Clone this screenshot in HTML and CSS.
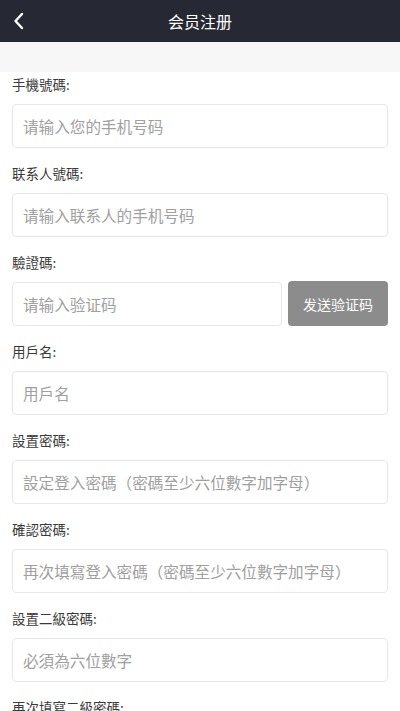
FILE: index.html
```html
<!DOCTYPE html>
<html lang="zh">
<head>
<meta charset="utf-8">
<meta name="viewport" content="width=device-width, initial-scale=1">
<title>会员注册</title>
<link rel="stylesheet" href="styles.css">
</head>
<body>
<header class="topbar">
  <a class="back" href="#" aria-label="返回">
    <svg width="14" height="18" viewBox="0 0 14 18"><path d="M10 2 L3.5 9 L10 16" fill="none" stroke="#fff" stroke-width="2.4" stroke-linecap="round" stroke-linejoin="round"/></svg>
  </a>
  <h1 class="title">会员注册</h1>
</header>
<div class="strip"></div>
<form class="form">
  <div class="field">
    <label class="label">手機號碼:</label>
    <input class="input" type="text" placeholder="请输入您的手机号码">
  </div>
  <div class="field">
    <label class="label">联系人號碼:</label>
    <input class="input" type="text" placeholder="请输入联系人的手机号码">
  </div>
  <div class="field">
    <label class="label">驗證碼:</label>
    <div class="code-row">
      <input class="input code" type="text" placeholder="请输入验证码">
      <button class="send" type="button">发送验证码</button>
    </div>
  </div>
  <div class="field">
    <label class="label">用戶名:</label>
    <input class="input" type="text" placeholder="用戶名">
  </div>
  <div class="field">
    <label class="label">設置密碼:</label>
    <input class="input" type="password" placeholder="設定登入密碼（密碼至少六位數字加字母）">
  </div>
  <div class="field">
    <label class="label">確認密碼:</label>
    <input class="input" type="password" placeholder="再次填寫登入密碼（密碼至少六位數字加字母）">
  </div>
  <div class="field">
    <label class="label">設置二級密碼:</label>
    <input class="input" type="password" placeholder="必須為六位數字">
  </div>
  <div class="field">
    <label class="label">再次填寫二級密碼:</label>
    <input class="input" type="password" placeholder="再次填寫二級密碼">
  </div>
</form>
</body>
</html>
```
FILE: styles.css
```css
* { box-sizing: border-box; }
html, body {
  margin: 0;
  padding: 0;
  background: #fff;
  font-family: "Noto Sans CJK SC", "Noto Sans", sans-serif;
}
.topbar {
  height: 42px;
  background: #262833;
  display: flex;
  align-items: center;
  justify-content: center;
  position: relative;
}
.back {
  position: absolute;
  left: 12px;
  top: 12px;
  display: flex;
}
.title {
  margin: 0;
  color: #fff;
  font-size: 16px;
  font-weight: 400;
  line-height: 42px;
}
.strip {
  height: 30px;
  background: #f7f7f7;
}
.form {
  display: flex;
  flex-direction: column;
  gap: 15px;
  padding: 2px 12px 0;
}
.field {
  display: flex;
  flex-direction: column;
}
.label {
  font-size: 13.5px;
  line-height: 20px;
  color: #3a3a3a;
  margin-bottom: 10px;
}
.input {
  height: 44px;
  border: 1px solid #e6e6e6;
  border-radius: 4px;
  padding: 0 10px;
  font-family: inherit;
  font-size: 15.6px;
  color: #333;
  background: #fff;
  outline: none;
  width: 100%;
}
.input::placeholder { color: #a0a0a0; }
.code-row {
  display: flex;
  gap: 6px;
}
.code { flex: 1; width: auto; min-width: 0; }
.send {
  width: 100px;
  height: 45px;
  margin-top: -1px;
  border: none;
  border-radius: 4px;
  background: #8c8c8c;
  color: #fff;
  font-family: inherit;
  font-size: 14px;
  padding: 0;
}
```
